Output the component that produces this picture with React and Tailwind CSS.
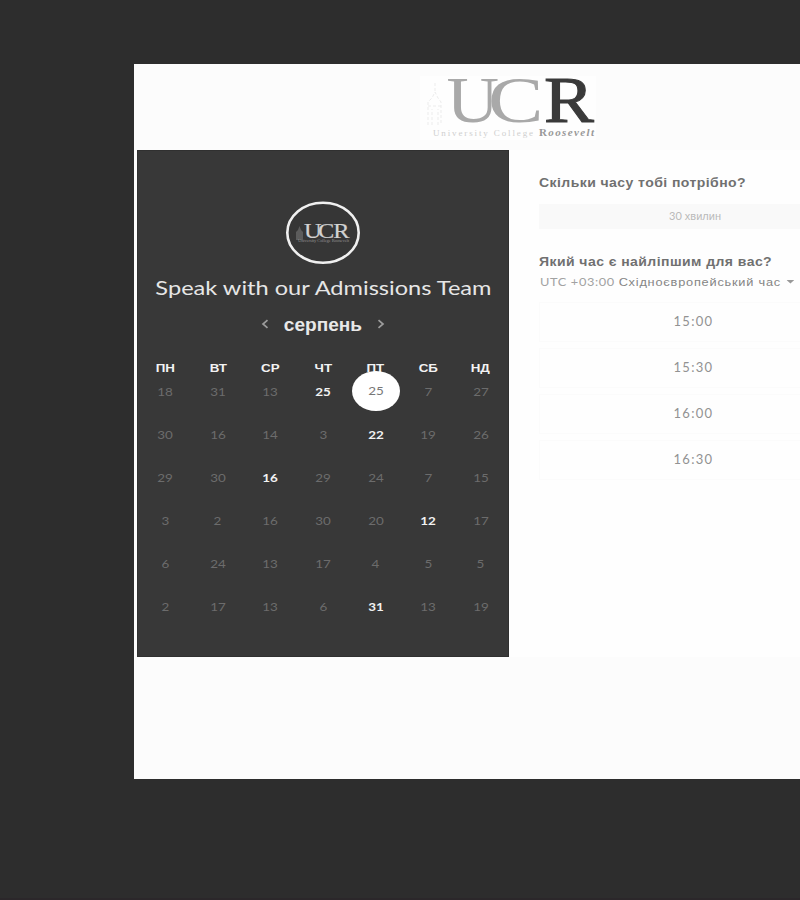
const weekdays = ['ПН', 'ВТ', 'СР', 'ЧТ', 'ПТ', 'СБ', 'НД'];

const weeks = [
  [18, 31, 13, 25, 25, 7, 27],
  [30, 16, 14, 3, 22, 19, 26],
  [29, 30, 16, 29, 24, 7, 15],
  [3, 2, 16, 30, 20, 12, 17],
  [6, 24, 13, 17, 4, 5, 5],
  [2, 17, 13, 6, 31, 13, 19],
];

const available = new Set(['0-3', '1-4', '2-2', '3-5', '5-4']);
const selected = '0-4';
const times = ['15:00', '15:30', '16:00', '16:30'];

function HeaderLogo() {
  return (
    <svg className="block" width="180" height="86" viewBox="0 0 180 86">
      <rect y="12" width="176" height="64" fill="#fefefe" />
      <path d="M8 61V38l4-4 3-6 3 6 3 4v23M15 19v9M8 42h13M12 61V45M18 61V45" fill="none" stroke="#ececec" strokeDasharray="3 2" />
      <g fontFamily="'Liberation Serif', serif">
        <text transform="translate(26.500 57.500) scale(1.12 1)" fontSize="65" fill="#a9a9a9">U</text>
        <text transform="translate(68 57.500) scale(1.28 1)" fontSize="65" fill="#a9a9a9">C</text>
        <text transform="translate(124 57.500) scale(1.15 1)" fontSize="65" fill="#3a3a3a" stroke="#3a3a3a" strokeWidth="1">R</text>
        <text x="13" y="72" fontSize="9" textLength="100" fill="#cfcfcf">University College</text>
        <text x="119" y="72" fontSize="11" fontWeight="700" textLength="55" fill="#999">
          R<tspan fontStyle="italic">oosevelt</tspan>
        </text>
      </g>
    </svg>
  );
}

function RoundLogo() {
  return (
    <svg className="block" width="76" height="66" viewBox="0 0 76 66">
      <ellipse cx="38" cy="32.700" rx="35.700" ry="30" fill="#363636" stroke="#f0f0f0" strokeWidth="2.6" />
      <path d="M11 40v-8l2-2 1.500-4 1.500 4 2 2v8z" fill="#5c5c5c" />
      <g fontFamily="'Liberation Serif', serif" fill="#d2d2d2" stroke="#d2d2d2" strokeWidth="0.2">
        <text transform="translate(19 37.500) scale(1.16 1)" fontSize="21">
          U<tspan dx="-3">C</tspan><tspan dx="-1">R</tspan>
        </text>
        <text x="13" y="42" fontSize="4.5" textLength="51" fill="#929292" stroke="none">University College Roosevelt</text>
      </g>
    </svg>
  );
}

function Chevron({ right }) {
  return (
    <svg className="-mt-[2px]" width="8" height="10" viewBox="0 0 8 10" fill="none" stroke="#9c9c9c" strokeWidth="1.7">
      <path d={right ? 'M1.5 1.2 6 5 1.5 8.8' : 'M6.5 1.2 2 5l4.5 3.8'} />
    </svg>
  );
}

function Day({ value, id }) {
  if (id === selected) {
    return (
      <div className="relative flex h-[43px] items-center justify-center">
        <span className="absolute top-[1px] left-1/2 flex h-[40px] w-[48px] -translate-x-1/2 items-center justify-center rounded-[50%] bg-white text-[#777]">
          <span className="scale-x-[1.12]">{value}</span>
        </span>
      </div>
    );
  }
  return (
    <div className={`flex h-[43px] items-center justify-center ${available.has(id) ? 'font-bold text-[#f2f2f2]' : 'text-[#6c6c6c]'}`}>
      <span className="scale-x-[1.12]">{value}</span>
    </div>
  );
}

function Calendar() {
  return (
    <section className="flex h-[507px] w-[372px] shrink-0 flex-col border border-[#303030] bg-[#383838] pt-[49px]">
      <div className="flex justify-center"><RoundLogo /></div>
      <h1 className="mt-[7px] flex h-[28px] items-center justify-center text-[20px] whitespace-nowrap text-[#e6e6e6]">
        <span className="scale-x-[1.18]">Speak with our Admissions Team</span>
      </h1>
      <div className="mt-[9px] flex h-[30px] items-center justify-center gap-[14px]">
        <Chevron />
        <span className="flex w-[80px] justify-center font-[Liberation_Sans,sans-serif] text-[17.500px] font-bold text-[#e8e8e8]"><span className="scale-x-[1.09]">серпень</span></span>
        <Chevron right />
      </div>
      <div className="mt-[20px] grid grid-cols-7 px-[1px] text-center font-[Liberation_Sans,sans-serif] text-[11.500px] leading-[16px] font-bold text-[#f3f3f3]">
        {weekdays.map((d) => <span key={d} className="scale-x-[1.16]">{d}</span>)}
      </div>
      <div className="-mt-[6px] grid grid-cols-7 px-[1px] text-[12px]">
        {weeks.map((week, r) => week.map((v, c) => <Day key={`${r}-${c}`} id={`${r}-${c}`} value={v} />))}
      </div>
    </section>
  );
}

function Question({ children }) {
  return (
    <h2 className="h-[18px] origin-left scale-x-[1.078] text-[13px] leading-[18px] font-bold tracking-[0.4px] whitespace-nowrap text-[#707070]">
      {children}
    </h2>
  );
}

function Booking() {
  return (
    <section className="flex h-[507px] min-w-0 flex-1 flex-col overflow-hidden bg-[#fefefe] pt-[24px] pl-[30px] font-[Liberation_Sans,sans-serif]">
      <Question>Скільки часу тобі потрібно?</Question>
      <button className="mt-[12px] mb-[24px] h-[25px] w-[312px] shrink-0 bg-[#f9f9f9] text-[11px] text-[#bababa]">
        <span className="font-[Lato,sans-serif]">30</span> хвилин
      </button>
      <Question>Який час є найліпшим для вас?</Question>
      <div className="mt-[2px] flex h-[18px] w-max origin-left scale-x-[1.11] items-center gap-[5px] pl-[1px] text-[11.500px] whitespace-nowrap text-[#858585]">
        <span><span className="font-[Lato,sans-serif] tracking-[0.550px] text-[#a2a2a2]">UTC +03:00 </span><span className="tracking-[0.7px]">Східноєвропейський час</span></span>
        <svg width="7" height="4" viewBox="0 0 7 4" fill="#999"><path d="M0 0h7L3.5 3.5z" /></svg>
      </div>
      <div className="mt-[11px] flex flex-col gap-[6px] font-[Lato,sans-serif]">
        {times.map((t) => (
          <button key={t} className="h-[40px] w-[309px] shrink-0 border border-[#fbfbfb] text-[13px] tracking-[1.300px] text-[#929292]">{t}</button>
        ))}
      </div>
    </section>
  );
}

export default function App() {
  return (
    <div className="flex h-[900px] w-[800px] flex-col overflow-hidden border-b-2 border-[#2b272a] bg-[#2d2d2d] pt-[64px] pl-[134px] font-[Lato,sans-serif]">
      <main className="flex h-[715px] w-[666px] shrink-0 flex-col bg-[#fcfcfc]">
        <header className="flex h-[86px] shrink-0 pl-[286px]"><HeaderLogo /></header>
        <div className="flex pl-[3px]">
          <Calendar />
          <Booking />
        </div>
      </main>
    </div>
  );
}
